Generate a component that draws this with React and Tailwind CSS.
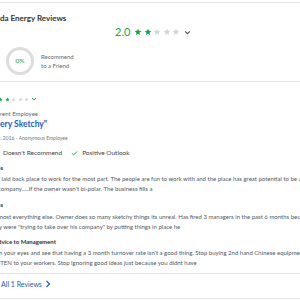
import { Check } from "lucide-react";

const GREEN = "#0caa41";

function Star({ on, size = 7 }) {
  return (
    <svg width={size} height={size} viewBox="0 0 24 24">
      <polygon
        points="12,2 14.9,8.6 22,9.3 16.6,14 18.2,21 12,17.3 5.8,21 7.4,14 2,9.3 9.1,8.6"
        fill={on ? GREEN : "#d4d6d8"}
      />
    </svg>
  );
}

function Chevron({ color, size = 7 }) {
  return (
    <svg width={size} height={size} viewBox="0 0 12 12">
      <polyline points="2,4 6,8 10,4" fill="none" stroke={color} strokeWidth="2" />
    </svg>
  );
}

function Stars({ rating, size, gap }) {
  return (
    <div className={`flex items-center ${gap}`}>
      {[1, 2, 3, 4, 5].map((i) => (
        <Star key={i} on={i <= rating} size={size} />
      ))}
    </div>
  );
}

export default function App() {
  return (
    <div className="flex flex-col w-[300px] h-[300px] overflow-hidden bg-white font-['Lato','Open_Sans',sans-serif] text-[#505863]">
      <div className="mt-[2px] border-t border-[#e3e4e6]" />

      {/* header */}
      <div className="flex flex-col h-[78px] shrink-0">
        <h1 className="mt-[10px] text-[8px] leading-[10px] font-bold text-[#333] whitespace-nowrap">
          da Energy Reviews
        </h1>
        <div className="mt-[3px] pl-[115px] flex items-center gap-[4px] h-[12px]">
          <span className="text-[11px] leading-[12px] text-[#0caa41]">2.0</span>
          <Stars rating={2} size={8} gap="gap-[1.5px]" />
          <Chevron color="#555" size={7} />
        </div>
        <div className="mt-[9px] pl-[6px] flex items-center gap-[7px]">
          <div className="relative w-[28px] h-[28px] flex items-center justify-center">
            <svg width="28" height="28" viewBox="0 0 28 28" className="absolute inset-0">
              <circle cx="14" cy="14" r="12.5" fill="none" stroke="#dcdddf" strokeWidth="3" />
            </svg>
            <span className="text-[6.5px] text-[#0caa41]">0%</span>
          </div>
          <div className="text-[6px] leading-[9px] text-[#666]">
            <div>Recommend</div>
            <div>to a Friend</div>
          </div>
        </div>
      </div>

      <div className="border-t border-[#e3e4e6]" />

      {/* review */}
      <div className="flex flex-col h-[191px] shrink-0">
        <div className="mt-[14px] flex items-center gap-[2px] ml-[-2px] h-[6px]">
          <Stars rating={2} size={5} gap="gap-[1.5px]" />
          <Chevron color={GREEN} size={6} />
        </div>
        <div className="mt-[7px] text-[6px] leading-[10px] text-[#666] whitespace-nowrap">rent Employee</div>
        <div className="text-[8.5px] leading-[10px] font-bold text-[#1861bf] whitespace-nowrap">ery Sketchy"</div>
        <div className="mt-[5px] text-[5px] leading-[8px] text-[#777] whitespace-nowrap ml-[-2px]">c. 2016 - Anonymous Employee</div>
        <div className="mt-[6px] flex items-center h-[10px] text-[6.5px] text-[#444] whitespace-nowrap">
          <span className="ml-[3px]">Doesn't Recommend</span>
          <Check size={7} color={GREEN} strokeWidth={3} className="ml-[9px]" />
          <span className="ml-[4px]">Positive Outlook</span>
        </div>

        <div className="mt-[5px] text-[6px] leading-[10px] font-bold text-[#333] whitespace-nowrap ml-[-3px]">os</div>
        <div className="mt-[1px] text-[6px] leading-[10px] whitespace-nowrap">
          <div className="ml-[-3px]">a laid back place to work for the most part. The people are fun to work with and the place has great potential to be a good</div>
          <div className="ml-[-2px]">company.....If the owner wasn't bi-polar. The business fills a</div>
        </div>

        <div className="mt-[6px] text-[6px] leading-[10px] font-bold text-[#333] whitespace-nowrap ml-[-3px]">ns</div>
        <div className="mt-[2px] text-[6px] leading-[10px] whitespace-nowrap">
          <div className="ml-[-2px]">most everything else. Owner does so many sketchy things its unreal. Has fired 3 managers in the past 6 months because</div>
          <div className="ml-[-1px]">y were "trying to take over his company" by putting things in place he</div>
        </div>

        <div className="mt-[5px] text-[6px] leading-[10px] font-bold text-[#333] whitespace-nowrap ml-[-2px]">dvice to Management</div>
        <div className="mt-[1px] text-[6px] leading-[10px] whitespace-nowrap">
          <div className="ml-[-1px]">n your eyes and see that having a 3 month turnover rate isn't a good thing. Stop buying 2nd hand Chinese equipment and</div>
          <div className="ml-[-3px]">STEN to your workers. Stop ignoring good ideas just because you didnt have</div>
        </div>
      </div>

      <div className="border-t border-[#e3e4e6]" />

      <div className="h-[24px] shrink-0 flex items-center gap-[3px] pl-[1px] pb-[4px] text-[7px] text-[#1861bf] whitespace-nowrap">
        <span>All 1 Reviews</span>
        <svg width="6" height="8" viewBox="0 0 6 8">
          <polyline points="1.5,1 4.5,4 1.5,7" fill="none" stroke="#1861bf" strokeWidth="1.2" />
        </svg>
      </div>
      <div className="border-t border-[#e3e4e6]" />
    </div>
  );
}
